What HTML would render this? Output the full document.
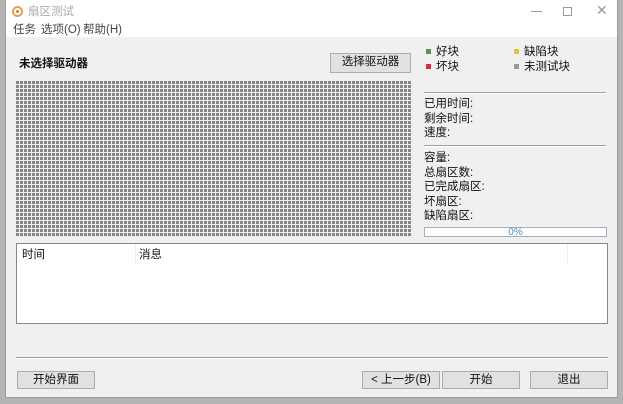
<!DOCTYPE html>
<html><head><meta charset="utf-8"><style>
*{margin:0;padding:0;box-sizing:border-box}
body{width:623px;height:404px;background:#b4b4b4;position:relative;overflow:hidden;font-family:"Liberation Sans","Noto Sans CJK SC",sans-serif;font-size:11.5px;color:#111}
.win{position:absolute;left:5px;top:0;width:613px;height:398px;background:#f0f0f0;border:1px solid #9a9a9a;border-top:none}
.a{position:absolute;white-space:nowrap;line-height:14px}
.btn{position:absolute;background:#e1e1e1;border:1px solid #adadad;text-align:center;line-height:17px;font-size:11.5px}
.sep{position:absolute;height:1px;background:#a0a0a0;border-bottom:1px solid #fff;box-sizing:content-box}
.dot{position:absolute;width:5px;height:5px}
</style></head><body>
<div class="win">
<div style="position:absolute;left:0;top:0;width:611px;height:37px;background:#fff"></div>
<div style="position:absolute;left:6px;top:6px;width:11px;height:11px;border-radius:50%;border:2px solid #e8a050;background:#fff"><div style="position:absolute;left:2px;top:2px;width:3px;height:3px;border-radius:50%;background:#c08040"></div></div>
<div class="a" style="left:22px;top:5px;color:#aaa">扇区测试</div>
<div style="position:absolute;left:525px;top:11px;width:11px;height:1px;background:#999"></div>
<div style="position:absolute;left:557px;top:7px;width:9px;height:9px;border:1px solid #999"></div>
<div class="a" style="left:590px;top:3px;color:#999;font-size:14px">✕</div>
<div class="a" style="left:7px;top:23px;color:#444">任务</div>
<div class="a" style="left:35px;top:23px;color:#444">选项(O)</div>
<div class="a" style="left:77px;top:23px;color:#444">帮助(H)</div>
<div class="a" style="left:13px;top:57px;font-weight:bold">未选择驱动器</div>
<div class="btn" style="left:324px;top:53px;width:81px;height:20px">选择驱动器</div>
<div style="position:absolute;left:10px;top:81px;width:396px;height:155px;background-color:#f0f0f0;background-image:linear-gradient(90deg,transparent 3px,#f0f0f0 3px),linear-gradient(#858585 3px,#f0f0f0 3px);background-size:4px 4px,4px 4px"></div>
<div class="dot" style="left:420px;top:49px;background:#4d9a4d"></div><div class="a" style="left:430px;top:45px">好块</div>
<div class="dot" style="left:508px;top:49px;background:#e0c040"></div><div class="a" style="left:518px;top:45px">缺陷块</div>
<div class="dot" style="left:420px;top:64px;background:#d03050"></div><div class="a" style="left:430px;top:60px">坏块</div>
<div class="dot" style="left:508px;top:64px;background:#999"></div><div class="a" style="left:518px;top:60px">未测试块</div>
<div class="sep" style="left:418px;top:92px;width:182px"></div>
<div class="a" style="left:418px;top:97px">已用时间:</div>
<div class="a" style="left:418px;top:112px">剩余时间:</div>
<div class="a" style="left:418px;top:126px">速度:</div>
<div class="sep" style="left:418px;top:145px;width:182px"></div>
<div class="a" style="left:418px;top:151px">容量:</div>
<div class="a" style="left:418px;top:166px">总扇区数:</div>
<div class="a" style="left:418px;top:180px">已完成扇区:</div>
<div class="a" style="left:418px;top:195px">坏扇区:</div>
<div class="a" style="left:418px;top:209px">缺陷扇区:</div>
<div style="position:absolute;left:418px;top:227px;width:183px;height:10px;background:#fff;border:1px solid #aab;text-align:center;font-size:10px;line-height:9px;color:#4a90c0">0%</div>
<div style="position:absolute;left:10px;top:243px;width:592px;height:81px;background:#fff;border:1px solid #888">
<div class="a" style="left:5px;top:4px">时间</div>
<div style="position:absolute;left:118px;top:0;width:1px;height:20px;background:#eee"></div>
<div class="a" style="left:122px;top:4px">消息</div>
<div style="position:absolute;left:550px;top:0;width:1px;height:20px;background:#eee"></div>
</div>
<div class="sep" style="left:10px;top:357px;width:592px"></div>
<div class="btn" style="left:11px;top:371px;width:78px;height:18px">开始界面</div>
<div class="btn" style="left:356px;top:371px;width:78px;height:18px">&lt; 上一步(B)</div>
<div class="btn" style="left:436px;top:371px;width:78px;height:18px">开始</div>
<div class="btn" style="left:524px;top:371px;width:78px;height:18px">退出</div>
</div>
</body></html>
